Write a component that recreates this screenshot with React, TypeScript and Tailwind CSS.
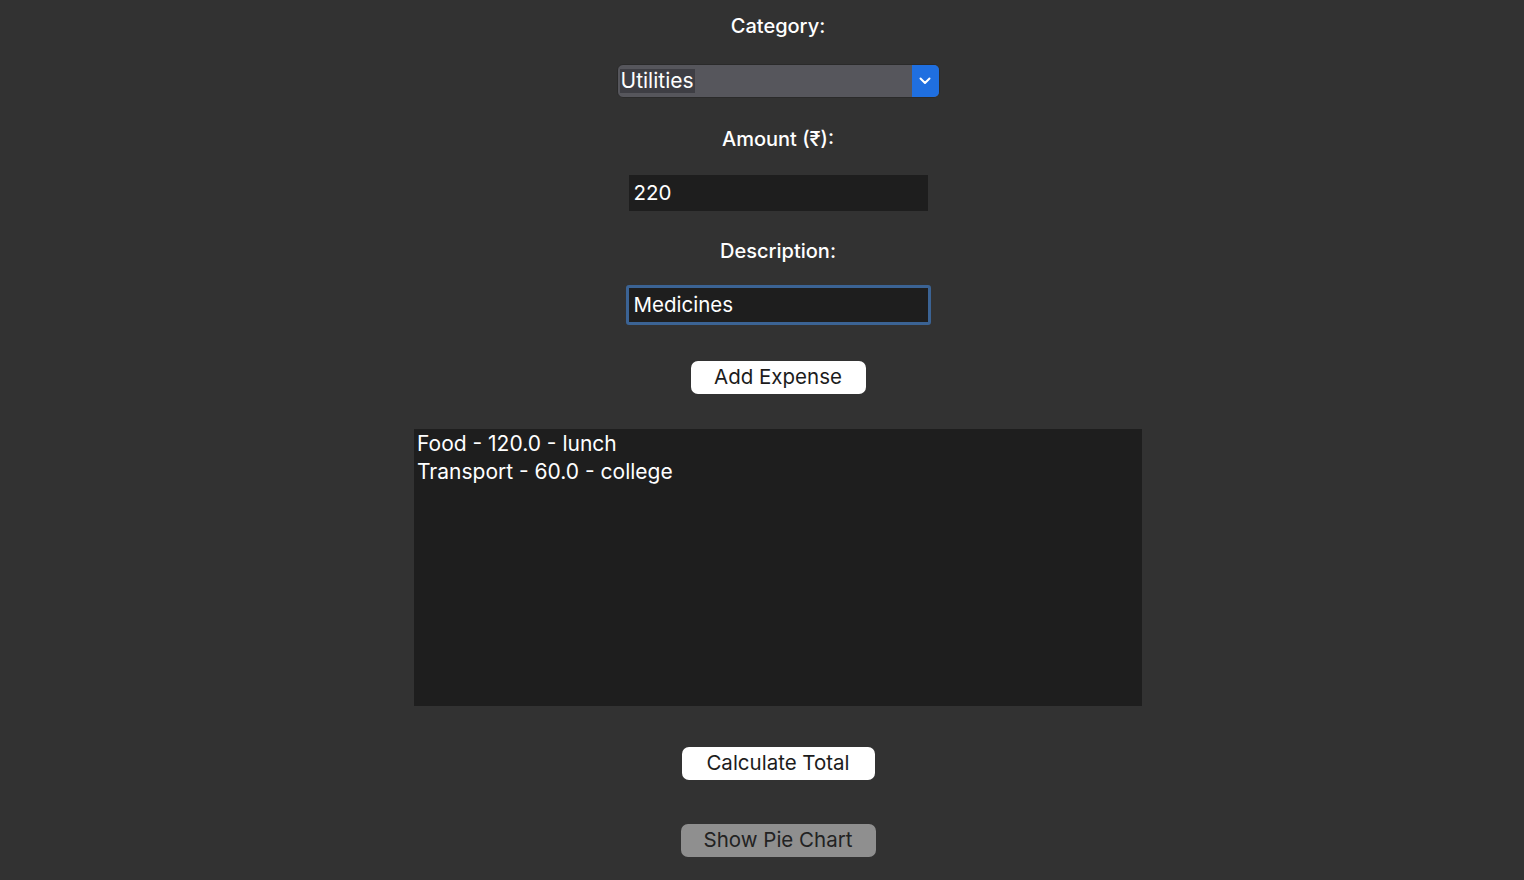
export default function App() {
  const entries = ["Food - 120.0 - lunch", "Transport - 60.0 - college"];

  return (
    <div
      className="min-h-screen w-full bg-[#323232] text-white flex flex-col items-center pl-[32px]"
      style={{ fontFamily: "Inter, 'Liberation Sans', sans-serif" }}
    >
      <div className="mt-[14px] h-6 leading-6 text-[20px] font-medium">Category:</div>

      <div className="mt-[26px] w-[323px] h-[34px] flex rounded-[6px] bg-[#56565c] border border-[#2a2a2a] overflow-hidden">
        <div className="flex-1 flex items-center pl-[2px]">
          <span className="text-[21px] leading-6 bg-[#3e3e44] px-[1px]">Utilities</span>
        </div>
        <div className="w-[27px] bg-[#1f6fe0] flex items-center justify-center">
          <svg width="12" height="8" viewBox="0 0 12 8" fill="none">
            <path d="M1.5 1.5 L6 6 L10.5 1.5" stroke="white" strokeWidth="2" strokeLinecap="round" strokeLinejoin="round" />
          </svg>
        </div>
      </div>

      <div className="mt-[29px] h-6 leading-6 text-[20px] font-medium">Amount (₹):</div>

      <div className="mt-[24px] w-[299px] h-[36px] bg-[#1e1e1e] flex items-center pl-[5px] text-[20.5px]">
        220
      </div>

      <div className="mt-[28px] h-6 leading-6 text-[20px] font-medium">Description:</div>

      <div className="mt-[22px] w-[305px] h-[40px] bg-[#1e1e1e] border-[3px] border-[#3b6394] rounded-[3px] flex items-center pl-[5px] text-[20.5px]">
        Medicines
      </div>

      <button className="mt-[36px] w-[175px] h-[33px] bg-white text-[#1c1c1c] rounded-[7px] text-[20.5px] flex items-center justify-center">
        Add Expense
      </button>

      <div className="mt-[35px] w-[728px] h-[277px] bg-[#1e1e1e] px-[3px] pt-[1px] text-[21px] leading-[28px]">
        {entries.map((e, i) => (
          <div key={i}>{e}</div>
        ))}
      </div>

      <button className="mt-[41px] w-[193px] h-[33px] bg-white text-[#1c1c1c] rounded-[7px] text-[20.5px] flex items-center justify-center">
        Calculate Total
      </button>

      <button className="mt-[44px] w-[195px] h-[33px] bg-[#8f8f8f] text-[#222] rounded-[7px] text-[20.5px] flex items-center justify-center">
        Show Pie Chart
      </button>
    </div>
  );
}
